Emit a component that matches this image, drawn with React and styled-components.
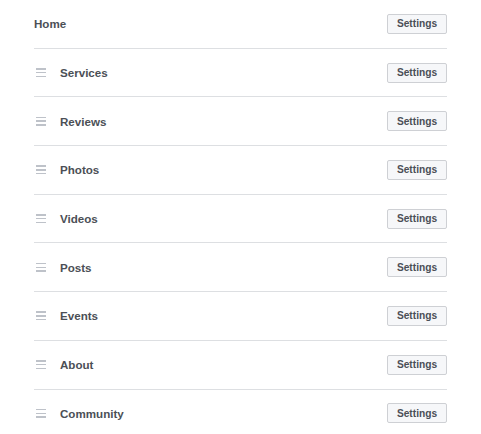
import React from "react";
import styled, { createGlobalStyle } from "styled-components";

const Global = createGlobalStyle`
  html, body { margin: 0; padding: 0; background: #fff; }
  body { font-family: "Liberation Sans", Arial, sans-serif; }
`;

const List = styled.div`
  width: 413px;
  margin-left: 34px;
  display: flex;
  flex-direction: column;
`;

const Row = styled.div`
  display: flex;
  align-items: center;
  height: 47.7px;
  border-top: ${(p) => (p.$first ? "none" : "1px solid #dddfe2")};
  padding-top: ${(p) => (p.$first ? "0" : "0")};
`;

const Handle = styled.span`
  width: 10px;
  height: 9px;
  margin-left: 2px;
  margin-right: 14px;
  display: flex;
  flex-direction: column;
  justify-content: space-between;
  span {
    display: block;
    height: 1.5px;
    background: #bec2c9;
  }
`;

const Label = styled.span`
  flex: 1;
  font-size: 11.6px;
  font-weight: bold;
  color: #4b4f56;
`;

const Button = styled.button`
  width: 60px;
  height: 20px;
  padding: 0;
  border: 1px solid #ced0d4;
  border-radius: 2px;
  background: #f6f7f9;
  color: #4b4f56;
  font-family: "Liberation Sans", Arial, sans-serif;
  font-size: 10.2px;
  font-weight: bold;
  display: flex;
  align-items: center;
  justify-content: center;
`;

const tabs = ["Services", "Reviews", "Photos", "Videos", "Posts", "Events", "About", "Community"];

export default function App() {
  return (
    <>
      <Global />
      <List>
        <Row $first>
          <Label>Home</Label>
          <Button>Settings</Button>
        </Row>
        {tabs.map((t) => (
          <Row key={t}>
            <Handle>
              <span />
              <span />
              <span />
            </Handle>
            <Label>{t}</Label>
            <Button>Settings</Button>
          </Row>
        ))}
      </List>
    </>
  );
}
